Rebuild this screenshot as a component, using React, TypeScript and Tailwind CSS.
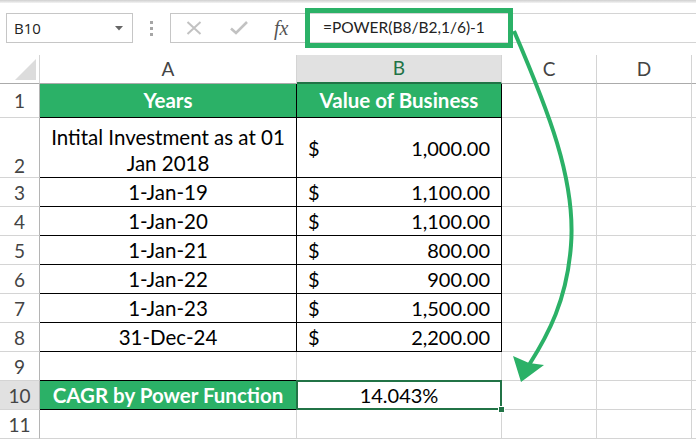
import React from 'react';

type Row = {
  n: number;
  h: string;
  a?: string;
  b?: string;
  kind?: 'head' | 'data' | 'cagr' | 'empty' | 'tall';
};

const rows: Row[] = [
  { n: 1, h: 'h-[34px]', a: 'Years', b: 'Value of Business', kind: 'head' },
  { n: 2, h: 'h-[60px]', a: 'Intital Investment as at 01 Jan 2018', b: '1,000.00', kind: 'tall' },
  { n: 3, h: 'h-[29px]', a: '1-Jan-19', b: '1,100.00', kind: 'data' },
  { n: 4, h: 'h-[29px]', a: '1-Jan-20', b: '1,100.00', kind: 'data' },
  { n: 5, h: 'h-[29px]', a: '1-Jan-21', b: '800.00', kind: 'data' },
  { n: 6, h: 'h-[29px]', a: '1-Jan-22', b: '900.00', kind: 'data' },
  { n: 7, h: 'h-[29px]', a: '1-Jan-23', b: '1,500.00', kind: 'data' },
  { n: 8, h: 'h-[29px]', a: '31-Dec-24', b: '2,200.00', kind: 'data' },
  { n: 9, h: 'h-[29px]', kind: 'empty' },
  { n: 10, h: 'h-[29px]', a: 'CAGR by Power Function', b: '14.043%', kind: 'cagr' },
  { n: 11, h: 'h-[29px]', kind: 'empty' },
];

function Toolbar() {
  return (
    <div className="h-[55px] flex flex-col">
      <div className="h-[3px] bg-gradient-to-b from-[#cfcfcf] to-[#f4f4f4]" />
      <div className="flex items-start pt-[10px]">
        {/* Name box */}
        <div className="ml-[6px] w-[127px] h-[30px] border border-[#c6c6c6] flex items-center justify-between pl-[7px] pr-[9px]">
          <span className="font-['Open_Sans',sans-serif] text-[15px] text-[#222] leading-none">B10</span>
          <svg width="8" height="5" viewBox="0 0 8 5">
            <polygon points="0,0 8,0 4,4.5" fill="#666" />
          </svg>
        </div>
        {/* dots */}
        <div className="w-[37px] h-[30px] flex flex-col items-center justify-center gap-[3px]">
          <div className="w-[3px] h-[3px] bg-[#a6a6a6]" />
          <div className="w-[3px] h-[3px] bg-[#a6a6a6]" />
          <div className="w-[3px] h-[3px] bg-[#a6a6a6]" />
        </div>
        {/* cancel / enter / fx */}
        <div className="w-[136px] h-[30px] border-y border-l border-[#c6c6c6] flex items-center">
          <svg className="ml-[15px]" width="16" height="14" viewBox="0 0 16 14">
            <path d="M1.5 1 L14.5 13 M14.5 1 L1.5 13" stroke="#c2c2c2" strokeWidth="2" />
          </svg>
          <svg className="ml-[28px]" width="18" height="14" viewBox="0 0 18 14">
            <path d="M1 7.5 L6 12 L17 1" stroke="#c2c2c2" strokeWidth="2.6" fill="none" />
          </svg>
          <span className="ml-[26px] font-['Liberation_Serif',serif] italic text-[20px] text-[#555] leading-none">
            fx
          </span>
        </div>
        {/* formula input */}
        <div className="flex-1 h-[30px] border-y border-[#d4d4d4] flex items-center pl-[17px]">
          <span className="text-[15.5px] text-[#222] leading-none">=POWER(B8/B2,1/6)-1</span>
        </div>
      </div>
    </div>
  );
}

function ColumnHeaders() {
  const base = 'h-[29px] border-b border-[#ababab] flex items-center justify-center text-[19px] text-[#444]';
  return (
    <>
      <div className={`${base} border-r border-r-[#d4d4d4] relative`}>
        <svg className="absolute left-[15px] top-[4px]" width="21" height="21" viewBox="0 0 21 21">
          <polygon points="0,21 21,0 21,21" fill="#dcdcdc" />
        </svg>
      </div>
      <div className={`${base} border-r border-r-[#d4d4d4]`}>A</div>
      <div className="h-[29px] bg-[#e1e1e1] border-b-2 border-[#217346] border-r border-r-[#d4d4d4] flex items-center justify-center text-[19px] text-[#217346]">
        B
      </div>
      <div className={`${base} border-r border-r-[#d4d4d4]`}>C</div>
      <div className={`${base} border-r border-r-[#d4d4d4]`}>D</div>
      <div className={base} />
    </>
  );
}

function SheetRow({ row }: { row: Row }) {
  const grid = 'border-r border-b border-[#d4d4d4]';
  const black = 'border-r border-b border-black';
  const rh = `${row.h} border-r border-r-[#b4b4b4] border-b border-b-[#d4d4d4] flex justify-center text-[19px] text-[#444] leading-none ${
    row.kind === 'tall' ? 'items-end pb-[2px]' : 'items-center'
  } ${row.n === 10 ? 'bg-[#e1e1e1]' : ''}`;

  let a: React.ReactNode;
  let b: React.ReactNode;

  if (row.kind === 'head') {
    a = (
      <div className={`${row.h} ${black} bg-[#2bb167] flex items-center justify-center text-white font-bold text-[20.5px]`}>
        {row.a}
      </div>
    );
    b = (
      <div className={`${row.h} ${black} bg-[#2bb167] flex items-center justify-center text-white font-bold text-[20.5px]`}>
        {row.b}
      </div>
    );
  } else if (row.kind === 'tall' || row.kind === 'data') {
    a = (
      <div
        className={`${row.h} ${black} flex items-center justify-center text-center text-[20.5px] leading-[26px] px-[4px] ${
          row.kind === 'tall' ? 'pt-[5px]' : ''
        }`}
      >
        {row.kind === 'tall' ? (
          <span>
            Intital Investment as at 01
            <br />
            Jan 2018
          </span>
        ) : (
          row.a
        )}
      </div>
    );
    b = (
      <div className={`${row.h} ${black} flex items-center justify-between pl-[11px] pr-[11px] text-[20px]`}>
        <span>$</span>
        <span>{row.b}</span>
      </div>
    );
  } else if (row.kind === 'cagr') {
    a = (
      <div className={`${row.h} ${black} bg-[#2bb167] flex items-center justify-center text-white font-bold text-[20.5px]`}>
        {row.a}
      </div>
    );
    b = (
      <div className={`${row.h} ${grid} relative flex items-center justify-center text-[20px]`}>
        {row.b}
        <div className="absolute -left-[1px] -top-[1px] -right-[1px] -bottom-[1px] border-2 border-[#217346]" />
        <div className="absolute -right-[4px] -bottom-[4px] w-[7px] h-[7px] bg-[#217346] border border-white" />
      </div>
    );
  } else {
    a = <div className={`${row.h} ${grid} ${row.n === 9 ? 'border-b-black' : ''}`} />;
    b = <div className={`${row.h} ${grid}`} />;
  }

  return (
    <>
      <div className={rh}>{row.n}</div>
      {a}
      {b}
      <div className={`${row.h} ${grid}`} />
      <div className={`${row.h} ${grid}`} />
      <div className={`${row.h} border-b border-[#d4d4d4]`} />
    </>
  );
}

function Overlay() {
  return (
    <>
      <div className="absolute left-[305px] top-[8px] w-[208px] h-[40px] border-[5px] border-[#2bb167] pointer-events-none" />
      <svg className="absolute left-0 top-0 pointer-events-none" width="696" height="441" viewBox="0 0 696 441">
        <path
          d="M514 31 C 548 110, 576 180, 571 245 C 567 300, 548 335, 529 365"
          stroke="#2bb167"
          strokeWidth="4"
          fill="none"
        />
        <polygon points="521,382 513,356 529,363 544,365" fill="#2bb167" />
      </svg>
    </>
  );
}

export default function App() {
  return (
    <div className="relative w-[696px] h-[441px] overflow-hidden bg-white text-black font-['Lato',sans-serif]">
      <Toolbar />
      <div className="grid grid-cols-[40px_257px_205px_95px_95px_4px]">
        <ColumnHeaders />
        {rows.map((r) => (
          <SheetRow key={r.n} row={r} />
        ))}
      </div>
      <Overlay />
    </div>
  );
}
